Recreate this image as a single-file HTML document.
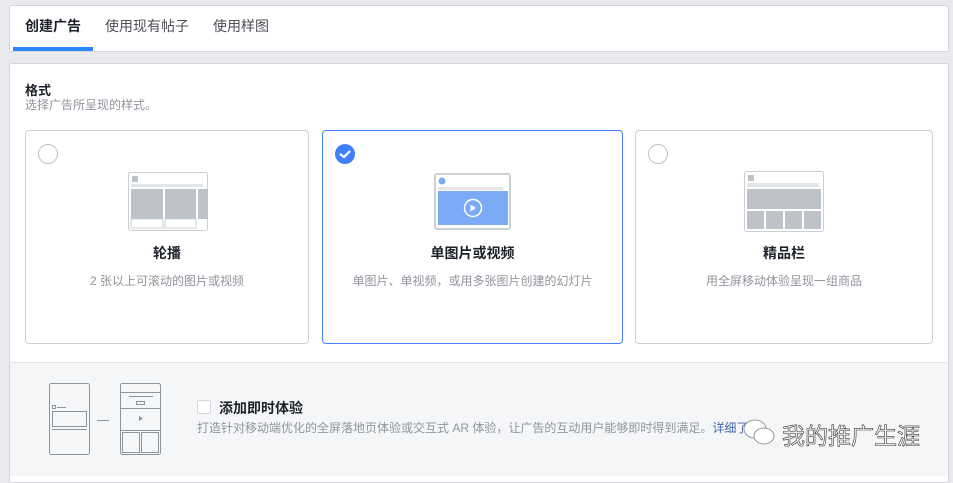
<!DOCTYPE html>
<html><head><meta charset="utf-8"><style>
*{margin:0;padding:0;box-sizing:border-box}
body{width:953px;height:476px;background:#e9eaed;font-family:"Liberation Sans","Noto Sans CJK SC",sans-serif;position:relative;overflow:hidden}
.a{position:absolute}
.card{background:#fff;border:1px solid #d3d5d9;border-radius:3px}
.opt{position:absolute;top:130px;height:214px;border:1px solid #ccd0d5;border-radius:4px;background:#fff;text-align:center}
.opt.sel{border-color:#4080ff}
.rad{position:absolute;left:12px;top:13px;width:20px;height:20px;border:1px solid #bec2c9;border-radius:50%}
.t{position:absolute;left:0;right:0;top:112px;font-size:14px;font-weight:bold;color:#1d2129}
.d{position:absolute;left:0;right:0;top:141px;font-size:12px;color:#90949c}
</style></head><body>
<div class="a card" style="left:9px;top:5px;width:940px;height:47px"></div>
<div class="a" style="left:25px;top:16px;font-size:14px;font-weight:bold;color:#1d2129">创建广告</div>
<div class="a" style="left:105px;top:16px;font-size:14px;color:#4b4f56">使用现有帖子</div>
<div class="a" style="left:213px;top:16px;font-size:14px;color:#4b4f56">使用样图</div>
<div class="a" style="left:13px;top:47px;width:80px;height:4px;background:#2d88ff"></div>

<div class="a card" style="left:9px;top:63px;width:940px;height:420px"></div>
<div class="a" style="left:25px;top:80px;font-size:13px;font-weight:bold;color:#1d2129">格式</div>
<div class="a" style="left:25px;top:96px;font-size:12px;color:#90949c">选择广告所呈现的样式。</div>

<div class="opt" style="left:25px;width:284px"><div class="rad"></div>
<svg class="a" style="left:102px;top:41px" width="80" height="59" viewBox="0 0 80 59"><rect x=".5" y=".5" width="79" height="58" rx="2" fill="#fff" stroke="#ccd0d5"/><rect x="4" y="4" width="6" height="6" fill="#bec2c9"/><rect x="3" y="12" width="72" height="3" fill="#e4e6e9"/><rect x="3" y="17" width="32" height="30" fill="#bec2c9"/><rect x="37" y="17" width="31" height="30" fill="#bec2c9"/><rect x="70" y="17" width="10" height="30" fill="#bec2c9"/><rect x="3" y="47" width="32" height="9" fill="none" stroke="#ccd0d5"/><rect x="37" y="47" width="31" height="9" fill="none" stroke="#ccd0d5"/></svg>
<div class="t">轮播</div><div class="d">2 张以上可滚动的图片或视频</div></div>

<div class="opt sel" style="left:322px;width:301px">
<svg class="a" style="left:11px;top:12px" width="22" height="22"><circle cx="11" cy="11" r="10" fill="#4080ff"/><path d="M6 11l4 3 6-6" stroke="#fff" stroke-width="2.2" fill="none"/></svg>
<svg class="a" style="left:111px;top:42px" width="77" height="57" viewBox="0 0 77 57"><rect x="1" y="1" width="75" height="55" rx="2" fill="#fff" stroke="#ccd0d5" stroke-width="2"/><circle cx="8" cy="8" r="3.5" fill="#7baaf7"/><rect x="4" y="14" width="65" height="3" fill="#e4e6e9"/><rect x="4" y="18" width="70" height="34" fill="#7baaf7"/><circle cx="39" cy="35" r="8.5" fill="none" stroke="#fff" stroke-width="1.5"/><path d="M36.5 31.5v7l5.5-3.5z" fill="#fff"/></svg>
<div class="t">单图片或视频</div><div class="d">单图片、单视频，或用多张图片创建的幻灯片</div></div>

<div class="opt" style="left:635px;width:298px"><div class="rad"></div>
<svg class="a" style="left:108px;top:40px" width="80" height="61" viewBox="0 0 80 61"><rect x=".5" y=".5" width="79" height="60" rx="2" fill="#fff" stroke="#ccd0d5"/><rect x="4" y="4" width="6" height="6" fill="#bec2c9"/><rect x="3" y="12" width="72" height="4" fill="#e4e6e9"/><rect x="3" y="18" width="74" height="20" fill="#bec2c9"/><rect x="3" y="40" width="17" height="18" fill="#bec2c9"/><rect x="22" y="40" width="17" height="18" fill="#bec2c9"/><rect x="41" y="40" width="17" height="18" fill="#bec2c9"/><rect x="60" y="40" width="17" height="18" fill="#bec2c9"/></svg>
<div class="t">精品栏</div><div class="d">用全屏移动体验呈现一组商品</div></div>

<div class="a" style="left:10px;top:362px;width:937px;height:114px;background:#f5f6f7;border-top:1px solid #e5e6e9"></div>
<svg class="a" style="left:48px;top:382px" width="115" height="74"><g fill="none" stroke="#8d949e"><rect x="1.5" y="1.5" width="40" height="71" rx="2"/><rect x="4.5" y="29.5" width="34" height="15"/><line x1="4" y1="47.5" x2="39" y2="47.5"/><rect x="4.5" y="23.5" width="3" height="3"/><line x1="9" y1="25.5" x2="18" y2="25.5"/><line x1="49" y1="38.5" x2="61" y2="38.5"/><rect x="72.5" y="1.5" width="40" height="71" rx="2"/><line x1="72" y1="10.5" x2="113" y2="10.5"/><line x1="81" y1="14.5" x2="105" y2="14.5"/><rect x="88.5" y="19.5" width="8" height="3"/><line x1="72" y1="26.5" x2="113" y2="26.5"/><line x1="72" y1="48.5" x2="113" y2="48.5"/><rect x="74.5" y="50.5" width="17" height="20"/><rect x="93.5" y="50.5" width="17" height="20"/></g><path d="M91 34v5l4-2.5z" fill="#8d949e"/></svg>
<div class="a" style="left:197px;top:400px;width:14px;height:14px;border:1px solid #d3d5d9;background:#fff;border-radius:2px"></div>
<div class="a" style="left:219px;top:398px;font-size:14px;font-weight:bold;color:#1d2129">添加即时体验</div>
<div class="a" style="left:197px;top:419px;font-size:12px;color:#90949c;white-space:nowrap">打造针对移动端优化的全屏落地页体验或交互式 AR 体验，让广告的互动用户能够即时得到满足。<span style="color:#4267b2">详细了解</span></div>
<svg class="a" style="left:742px;top:418px" width="36" height="30"><ellipse cx="13" cy="11" rx="11" ry="9" fill="#fff" stroke="#999"/><ellipse cx="22" cy="18" rx="10" ry="8" fill="#fff" stroke="#999"/></svg>
<div class="a" style="left:782px;top:417px;font-size:23px;color:#fff;-webkit-text-stroke:0.6px #333;white-space:nowrap">我的推广生涯</div>
</body></html>
